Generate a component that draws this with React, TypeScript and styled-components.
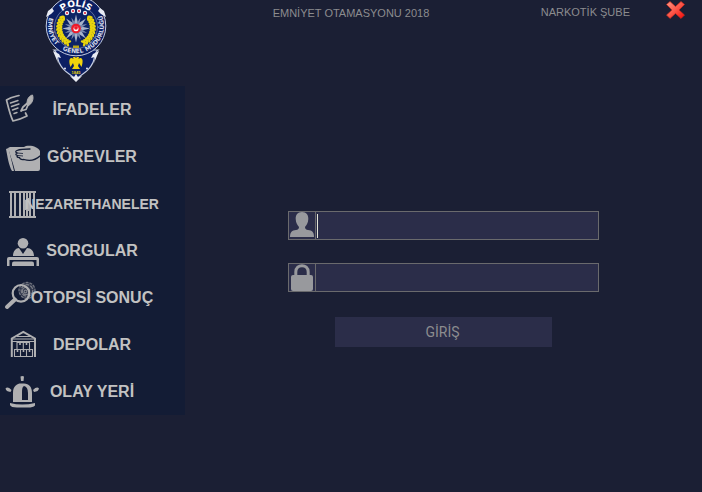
import React from "react";
import styled, { createGlobalStyle } from "styled-components";

const GlobalStyle = createGlobalStyle`
  *, *::before, *::after { box-sizing: border-box; }
  body { margin: 0; background: #1b1f34; }
`;

const Page = styled.div`
  min-height: 100vh;
  display: flex;
  flex-direction: column;
  background: #1b1f34;
  color: #8c8c8f;
  font-family: "Liberation Sans", Arial, sans-serif;
`;

const Header = styled.header`
  display: grid;
  grid-template-columns: 1fr auto 1fr;
  height: 86px;
  overflow: hidden;
`;

const LogoSlot = styled.div`
  padding-left: 45px;
  line-height: 0;
`;

const Title = styled.h1`
  margin: 0;
  padding-top: 6px;
  font-size: 11px;
  font-weight: 400;
  line-height: 14px;
  white-space: nowrap;
`;

const HeaderRight = styled.div`
  display: flex;
  justify-content: flex-end;
  align-items: flex-start;
  gap: 35px;
  padding-right: 16px;
`;

const Branch = styled.span`
  padding-top: 5px;
  font-size: 11px;
  line-height: 14px;
  white-space: nowrap;
`;

const CloseButton = styled.button`
  display: flex;
  padding: 0;
  border: 0;
  background: none;
  cursor: pointer;
`;

const Body = styled.div`
  flex: 1;
  display: flex;
  align-items: stretch;
`;

const Sidebar = styled.nav`
  flex: 0 0 185px;
  align-self: flex-start;
  display: flex;
  flex-direction: column;
  background: #131c35;
`;

const NavButton = styled.button<{ $small?: boolean }>`
  display: grid;
  grid-template-columns: 1fr;
  align-items: center;
  height: 47px;
  padding: 0;
  border: 0;
  background: none;
  color: #c2c2c2;
  font: 700 ${(p) => (p.$small ? 14 : 16)}px/20px "Liberation Sans", Arial, sans-serif;
  cursor: pointer;

  > * { grid-area: 1 / 1; }
`;

const NavLabel = styled.span`
  padding-right: 1px;
`;

const NavIcon = styled.svg`
  width: 48px;
  height: 47px;
  color: #b0b0b2;
`;

const Main = styled.main`
  flex: 1;
  display: flex;
  align-items: center;
  justify-content: center;
  padding-bottom: 20px;
`;

const LoginForm = styled.form`
  width: 60%;
  display: flex;
  flex-direction: column;
  align-items: center;
`;

const Field = styled.label`
  display: flex;
  align-items: center;
  width: 100%;
  height: 29px;
  margin-bottom: 23px;
  border: 1px solid #6a6a6d;
  background: #2b2d49;
`;

const FieldIcon = styled.svg`
  flex: none;
  width: 27px;
  height: 27px;
  border-right: 1px solid #6a6a6d;
  color: #98999d;
`;

const Caret = styled.span`
  flex: none;
  width: 1px;
  height: 24px;
  margin-left: 1px;
  background: #e6e6d8;

  label:focus-within & { visibility: hidden; }
`;

const Input = styled.input`
  flex: 1;
  min-width: 0;
  height: 100%;
  padding: 0 2px;
  border: 0;
  outline: 0;
  background: transparent;
  color: #c2c2c2;
  font: 400 16px/20px "Liberation Sans", Arial, sans-serif;
`;

const Submit = styled.button`
  width: 70%;
  height: 30px;
  margin-top: 2px;
  padding: 0 2px 0 0;
  border: 0;
  background: #2b2d49;
  color: #8c8c8f;
  font: 400 14px/20px Roboto, sans-serif;
  cursor: pointer;
`;

const points = (n: number, outer: number, inner: number, cx: number, cy: number) =>
  Array.from({ length: n * 2 }, (_, i) => {
    const r = i % 2 ? inner : outer;
    const a = (Math.PI * i) / n - Math.PI / 2;
    return `${(cx + r * Math.cos(a)).toFixed(2)},${(cy + r * Math.sin(a)).toFixed(2)}`;
  }).join(" ");

const leafRows = Array.from({ length: 11 }, (_, i) => -38 + i * 10);

function PoliceBadge() {
  return (
    <svg width="62" height="84" viewBox="0 0 62 84" role="img" aria-label="Polis">
      <defs>
        <path id="badge-top" d="M9.5 28 A21.5 21.5 0 0 1 52.5 28" />
        <path id="badge-ring" d="M5 15.5 A28 27.5 0 1 0 57 15.5" />
      </defs>
      <path
        d="M9 50 C14 54 11 60 16 66 C20 73 26 74 31 80 C36 74 42 73 46 66 C51 60 48 54 53 50 Z"
        fill="#0b1f63"
        stroke="#c4cce0"
        strokeWidth="1.2"
      />
      <circle cx="31" cy="26" r="29.8" fill="#0b1f63" stroke="#c4cce0" strokeWidth="1" />
      <path d="M1 17 L3 11 L7 8 L9 11 L6 14 Z M61 17 L59 11 L55 8 L53 11 L56 14 Z" fill="#e9ecf4" />
      <path d="M8 51 L14 54 L16 58 L12 57 L13 63 Z M54 51 L48 54 L46 58 L50 57 L49 63 Z" fill="#e9ecf4" />
      <path d="M25 76 L29 77 L31 74 L33 77 L37 76 L31 82 Z" fill="#e9ecf4" />
      <circle cx="31" cy="27" r="21.5" fill="#0d2365" stroke="#8f9cc4" strokeWidth=".6" />
      <text fill="#fff" fontFamily="DejaVu Sans" fontWeight="700" fontSize="9" textAnchor="middle">
        <textPath href="#badge-top" startOffset="50%">POLİS</textPath>
      </text>
      <g fill="#d5daea" fontFamily="DejaVu Sans" fontWeight="700" fontSize="6" textAnchor="middle">
        <text><textPath href="#badge-ring" startOffset="16%">EMNİYET</textPath></text>
        <text><textPath href="#badge-ring" startOffset="47%">GENEL</textPath></text>
        <text><textPath href="#badge-ring" startOffset="80%">MÜDÜRLÜĞÜ</textPath></text>
      </g>
      {leafRows.map((a) => (
        <g key={a} fill="#e8d40c">
          <g transform={`rotate(${a} 31 28)`}>
            <ellipse cx="46.500" cy="28" rx="2.600" ry="1.300" transform="rotate(-50 46.5 28)" />
            <ellipse cx="49" cy="28" rx="2.600" ry="1.300" transform="rotate(-130 49 28)" />
          </g>
          <g transform={`rotate(${-a} 31 28)`}>
            <ellipse cx="15.500" cy="28" rx="2.600" ry="1.300" transform="rotate(50 15.5 28)" />
            <ellipse cx="13" cy="28" rx="2.600" ry="1.300" transform="rotate(130 13 28)" />
          </g>
        </g>
      ))}
      <polygon points={points(8, 14, 5.5, 31, 28.5)} fill="#a9b3cb" />
      <polygon points={points(8, 12, 4.5, 31, 28.5)} fill="#7a89ae" transform="rotate(22.5 31 28.5)" />
      <circle cx="31" cy="28.5" r="4.8" fill="#ee1a2a" />
      <circle cx="31" cy="28.8" r="2.5" fill="#fff" />
      <circle cx="31" cy="27.8" r="1.9" fill="#ee1a2a" />
      {[[22, 13], [28, 11], [34, 11], [40, 13]].map(([x, y]) => (
        <g key={x}>
          <circle cx={x} cy={y} r="2.2" fill="#eef0f6" />
          <circle cx={x} cy={y} r="1.1" fill="#e3263b" />
        </g>
      ))}
      <path d="M28 45.5 H34 V48 H28 Z" fill="#b7a51c" />
      <path
        d="M30 57 L31 58 L32 57 L34 57 L33.5 59 C37 56 39 60 36.5 67 L34 63 L33 66 L35 69 H27 L29 66 L28 63 L25.5 67 C23 60 25 56 28.5 59 L28 57 Z"
        fill="#f0d40c"
      />
      <text x="31" y="73.5" fill="#e8d40c" fontFamily="Liberation Sans" fontWeight="700" fontSize="4" textAnchor="middle">1845</text>
      <circle cx="20" cy="68.5" r=".9" fill="#fff" />
      <circle cx="42" cy="68.5" r=".9" fill="#fff" />
    </svg>
  );
}

const StatementIcon = () => (
  <g fill="none" stroke="currentColor" strokeLinecap="round" strokeLinejoin="round">
    <path d="M19 9.5 C15 10.5 11 11 6.5 14 C8 20 10 29 13 35 C18 34 23 32 27 30 L25.5 27" strokeWidth="1.7" />
    <path d="M10.5 17 L18 14.5 M11.5 20.5 L19 18 M12.5 24 L18 22 M14 27.5 L17 26.5" strokeWidth="1.4" />
    <path d="M21 25 L23 21 L27 17.5 M22 24.5 L26 23.5 L28 19" strokeWidth="1.8" />
    <path d="M27 17 C27 12 30 9.5 32.5 9 C34 13 32 18 28.5 19.5 Z" fill="currentColor" strokeWidth="1" />
  </g>
);

const TaskIcon = () => (
  <g>
    <path d="M6 16 L8.5 15 L14 38 H12 C9 33 7.5 24 6 16 Z" fill="currentColor" />
    <path d="M8 15 L10 14 H24 L26 13 C32 12 38 14 40 18 V36 Q40 38 38 38 H15 C13.5 31 10 22 8 15 Z" fill="currentColor" />
    <path
      d="M30 16 C26 16 21 16 17 17.5 Q14.5 18.5 17 20 Q14.5 21.5 17.5 22.5 Q16 24.5 19.5 24.7 Q20 27 24 26.5 C29 28 35 27.5 40 23"
      fill="currentColor"
      stroke="#131c35"
      strokeWidth="1.3"
      strokeLinecap="round"
    />
    <path d="M17 20 L23 20.5 M18 22.5 L23 23" stroke="#131c35" strokeWidth=".8" />
  </g>
);

const JailIcon = () => (
  <path
    d="M9 11 H36 V13 H35 V36 H36 V38 H9 V36 H10 V13 H9 Z M12 13 V36 H14 V13 Z M16 13 V36 H19 V13 Z M21 13 V36 H23 V13 Z M25 13 V20 H26 V13 Z M25 30 V36 H26 V30 Z M28 13 V18 H29 V13 Z M28 31 V36 H29 V31 Z M31 13 V36 H33 V13 Z"
    fill="currentColor"
    fillRule="evenodd"
  />
);

const InquiryIcon = () => (
  <g fill="currentColor">
    <circle cx="23" cy="16.3" r="5.3" />
    <path d="M13 29 C13 24 16 21 19 21 L23 27 L27 21 C31 21 34 24 34 29 Z" />
    <path d="M9 30 H37 Q39 30 39 32 V39 H36.5 V33 H9.5 V39 H7 V32 Q7 30 9 30 Z" />
    <path d="M14 34.5 H32 Q34 34.5 34 36.5 V39 H12 V36.5 Q12 34.5 14 34.5 Z" />
  </g>
);

const AutopsyIcon = () => (
  <g fill="none" stroke="currentColor">
    <circle cx="27" cy="16.5" r="8" fill="currentColor" fillOpacity=".3" strokeWidth="1.3" strokeDasharray="3 1" opacity=".6" />
    <circle cx="27" cy="16.5" r="5.8" strokeWidth="1.2" strokeDasharray="4 1" opacity=".6" />
    <circle cx="26" cy="17" r="3.6" strokeWidth="1.2" opacity=".6" />
    <circle cx="25.5" cy="17.5" r="1.4" strokeWidth="1.2" opacity=".6" />
    <circle cx="21" cy="19.3" r="8.3" strokeWidth="2.2" />
    <path d="M15 25.5 L7 33" strokeWidth="4" strokeLinecap="round" />
  </g>
);

const DepotIcon = () => (
  <g fill="none" stroke="currentColor">
    <path d="M11.8 36 V17.5 L23.3 11 L35 17.5 V36" strokeWidth="2" />
    <path d="M17 15.5 H30 M12 18 H35 M12 20.5 H35" strokeWidth="1.2" />
    <path d="M17 28 V21.5 H29.5 V28 M23.3 21.5 V28 M14.5 35.5 V28.5 H32.5 V35.5 Z M20.5 28.5 V35 M26.5 28.5 V35" strokeWidth="1.1" />
    <path d="M20 22 V24 M26.5 22 V24 M17.5 29 V31 M23.5 29 V31 M29.5 29 V31" strokeWidth="1.6" />
  </g>
);

const SceneIcon = () => (
  <g fill="currentColor">
    <path d="M13 34 V25 C13 18 17 15.5 21 15.5 H24 C29 15.5 32 19 32 25 V34 Z M24 18 C22 19 22 22 22 25 V32 H28 V25 Q28 19 24 18 Z" fillRule="evenodd" />
    <path d="M10 35 Q22 38 35 35 V37.5 Q33 39.5 28 39.5 H17 Q11 39.5 10 37 Z" />
    <path d="M20.5 8.5 Q22.3 7.5 24 8.5 L23.5 13 H21 Z M5.5 20.5 Q7.5 18 11.5 22 L10.5 24 Q6 23.5 5.5 20.5 Z M39 20.5 Q37 18 33 22 L34 24 Q38.5 23.5 39 20.5 Z" />
  </g>
);

const navItems = [
  { label: "İFADELER", Icon: StatementIcon },
  { label: "GÖREVLER", Icon: TaskIcon },
  { label: "NEZARETHANELER", Icon: JailIcon, small: true },
  { label: "SORGULAR", Icon: InquiryIcon },
  { label: "OTOPSİ SONUÇ", Icon: AutopsyIcon },
  { label: "DEPOLAR", Icon: DepotIcon },
  { label: "OLAY YERİ", Icon: SceneIcon },
];

export default function App() {
  return (
    <Page lang="tr">
      <GlobalStyle />
      <Header>
        <LogoSlot>
          <PoliceBadge />
        </LogoSlot>
        <Title>EMNİYET OTAMASYONU 2018</Title>
        <HeaderRight>
          <Branch>NARKOTİK ŞUBE</Branch>
          <CloseButton type="button" aria-label="Kapat">
            <svg width="21" height="20" viewBox="0 0 21 20">
              <defs>
                <linearGradient id="close-fill" x1="0" y1="0" x2="1" y2="1">
                  <stop offset="0" stopColor="#ff9a88" />
                  <stop offset=".5" stopColor="#fb5648" />
                  <stop offset="1" stopColor="#f50808" />
                </linearGradient>
              </defs>
              <path
                d="M5 1.5 L10.5 6.5 L16 1.5 L19.5 4.5 L14 10 L19.5 15 L16 18.5 L10.5 13.5 L5 18.5 L1.5 15 L7 10 L1.5 4.5 Z"
                fill="url(#close-fill)"
                stroke="#c92a1c"
                strokeWidth=".7"
              />
            </svg>
          </CloseButton>
        </HeaderRight>
      </Header>
      <Body>
        <Sidebar>
          {navItems.map(({ label, Icon, small }) => (
            <NavButton key={label} type="button" $small={small}>
              <NavIcon viewBox="0 0 48 47" aria-hidden="true">
                <Icon />
              </NavIcon>
              <NavLabel>{label}</NavLabel>
            </NavButton>
          ))}
        </Sidebar>
        <Main>
          <LoginForm onSubmit={(e) => e.preventDefault()}>
            <Field>
              <FieldIcon viewBox="0 0 26 27" aria-hidden="true">
                <path
                  d="M13 0 C17.5 0 19.5 3 19.3 7 C19.2 11 17.5 13 16 15 Q16 17.5 19 18 C23 18.5 25 20 25 25 H1 C1 20 3 18.5 7 18 Q10 17.5 10 15 C8.5 13 6.8 11 6.7 7 C6.5 3 8.5 0 13 0 Z"
                  fill="currentColor"
                />
              </FieldIcon>
              <Caret />
              <Input type="text" name="username" aria-label="Kullanıcı adı" />
            </Field>
            <Field>
              <FieldIcon viewBox="0 0 26 27" aria-hidden="true">
                <path d="M6.8 13 V8 C6.8 -.5 19.2 -.5 19.2 8 V13" fill="none" stroke="currentColor" strokeWidth="3" />
                <rect x="2" y="11" width="22" height="16" rx="2" fill="currentColor" />
              </FieldIcon>
              <Input type="password" name="password" aria-label="Şifre" />
            </Field>
            <Submit type="submit">GİRİŞ</Submit>
          </LoginForm>
        </Main>
      </Body>
    </Page>
  );
}
